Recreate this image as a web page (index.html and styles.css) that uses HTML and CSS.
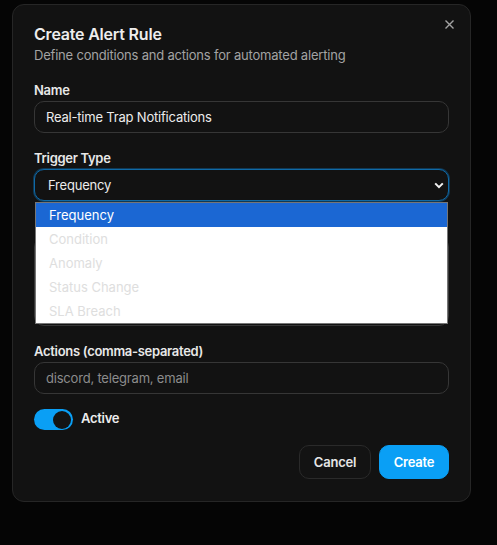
FILE: index.html
```html
<!DOCTYPE html>
<html lang="en">
<head>
<meta charset="utf-8">
<title>Create Alert Rule</title>
<link rel="stylesheet" href="styles.css">
</head>
<body>
<div class="dialog">
  <div class="header">
    <div class="header-text">
      <h2 class="title">Create Alert Rule</h2>
      <p class="subtitle">Define conditions and actions for automated alerting</p>
    </div>
    <button class="close" aria-label="Close">
      <svg width="9" height="9" viewBox="0 0 9 9"><path d="M0.5 0.5 L8.5 8.5 M8.5 0.5 L0.5 8.5" stroke="#a3a3a3" stroke-width="1.4" fill="none"/></svg>
    </button>
  </div>

  <div class="field">
    <label class="label">Name</label>
    <div class="input">Real-time Trap Notifications</div>
  </div>

  <div class="field">
    <label class="label">Trigger Type</label>
    <div class="select-wrap">
      <div class="select">
        <span>Frequency</span>
        <svg class="chevron" width="10" height="7" viewBox="0 0 10 7"><path d="M1.2 1.4 L5 5.2 L8.8 1.4" stroke="#f2f2f2" stroke-width="2" fill="none"/></svg>
      </div>
      <ul class="listbox">
        <li class="opt selected">Frequency</li>
        <li class="opt">Condition</li>
        <li class="opt">Anomaly</li>
        <li class="opt">Status Change</li>
        <li class="opt">SLA Breach</li>
      </ul>
    </div>
  </div>

  <div class="field">
    <div class="label-spacer"></div>
    <div class="input textarea"></div>
  </div>

  <div class="field">
    <label class="label">Actions (comma-separated)</label>
    <div class="input placeholder">discord, telegram, email</div>
  </div>

  <div class="switch-row">
    <div class="switch"><span class="knob"></span></div>
    <span class="switch-label">Active</span>
  </div>

  <div class="footer">
    <button class="btn btn-cancel">Cancel</button>
    <button class="btn btn-create">Create</button>
  </div>
</div>
</body>
</html>
```

FILE: styles.css
```css
* { box-sizing: border-box; }
html, body { margin: 0; padding: 0; }
body {
  background: #050505;
  font-family: Inter, "Noto Sans", sans-serif;
  color: #ececec;
  padding: 4px 26px 0 12px;
  height: 545px;
}
.dialog {
  width: 459px;
  height: 498px;
  background: #121212;
  border: 1px solid #262626;
  border-radius: 12px;
  padding: 17px 21px 22px 21px;
  display: flex;
  flex-direction: column;
}
.header {
  display: flex;
  align-items: flex-start;
  margin-bottom: 17px;
}
.header-text { flex: 1; }
.title {
  margin: 0;
  font-size: 16px;
  line-height: 24px;
  font-weight: 600;
  color: #ededed;
  letter-spacing: -0.2px;
}
.subtitle {
  margin: 0;
  font-size: 13px;
  line-height: 18px;
  color: #a3a3a3;
  letter-spacing: -0.2px;
}
.close {
  background: none;
  border: none;
  padding: 0;
  width: 9px;
  height: 9px;
  margin-top: -2px;
  margin-right: -5px;
  display: flex;
}
.field {
  display: flex;
  flex-direction: column;
  gap: 2px;
  margin-bottom: 16px;
}
.label {
  font-size: 13px;
  line-height: 18px;
  font-weight: 600;
  color: #e8e8e8;
  letter-spacing: -0.3px;
}
.label-spacer { height: 18px; }
.input {
  height: 32px;
  border: 1px solid #363636;
  border-radius: 10px;
  background: #121212;
  padding: 0 11px;
  font-size: 13px;
  line-height: 30px;
  color: #ececec;
  letter-spacing: -0.2px;
}
.input.textarea { height: 89px; }
.input.placeholder { color: #8c8c8c; }
.select-wrap { position: relative; }
.select {
  height: 32px;
  border: 1px solid #0f69a6;
  box-shadow: 0 0 0 1px rgba(15, 105, 166, 0.45);
  border-radius: 10px;
  background: #121212;
  padding: 0 4px 0 13px;
  font-size: 13px;
  color: #ececec;
  letter-spacing: -0.2px;
  display: flex;
  align-items: center;
  justify-content: space-between;
}
.listbox {
  position: absolute;
  top: 33px;
  left: 1px;
  right: 1px;
  margin: 0;
  padding: 0;
  list-style: none;
  background: #ffffff;
  border: 1px solid #767676;
  z-index: 5;
}
.opt {
  height: 24px;
  line-height: 24px;
  padding-left: 13px;
  font-size: 13px;
  color: #dedede;
}
.opt.selected {
  background: #1b67d3;
  color: #ffffff;
}
.switch-row {
  display: flex;
  align-items: center;
  gap: 8px;
  margin-top: -1px;
}
.switch {
  width: 39px;
  height: 21px;
  border-radius: 11px;
  background: #0a9ff5;
  display: flex;
  align-items: center;
  justify-content: flex-end;
  padding: 0 2px;
}
.knob {
  width: 18px;
  height: 18px;
  border-radius: 50%;
  background: #141414;
}
.switch-label {
  font-size: 13px;
  font-weight: 600;
  color: #ececec;
  letter-spacing: -0.3px;
  line-height: 16px;
  margin-top: -3px;
}
.footer {
  margin-top: auto;
  display: flex;
  justify-content: flex-end;
  gap: 8px;
}
.btn {
  height: 34px;
  border-radius: 10px;
  font-family: Inter, "Noto Sans", sans-serif;
  font-size: 13px;
  font-weight: 600;
  letter-spacing: -0.2px;
  padding: 0;
}
.btn-cancel {
  width: 72px;
  background: #131313;
  border: 1px solid #2a2a2a;
  color: #e6e6e6;
}
.btn-create {
  width: 70px;
  background: #0a9ff5;
  border: 1px solid #0a9ff5;
  color: #ffffff;
}
```
